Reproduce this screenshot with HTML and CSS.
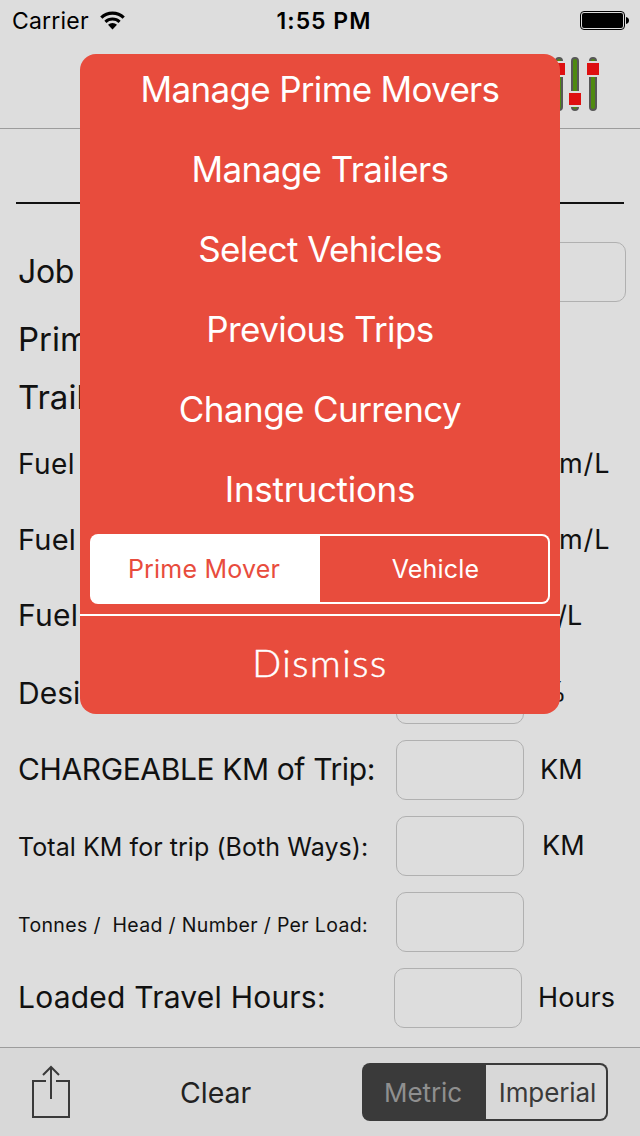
FILE: index.html
```html
<!DOCTYPE html>
<html lang="en">
<head>
  <meta charset="UTF-8" />
  <title>Trip Calculator</title>
  <link rel="stylesheet" href="styles.css">
</head>
<body>
  <div class="status-bar">
    <div class="carrier">
      <span>Carrier</span>
      <svg class="wifi" width="25" height="19" viewBox="0 0 25 19">
        <path d="M1.3 6.6a16 16 0 0 1 22.4 0" fill="none" stroke="#000" stroke-width="3.2" />
        <path d="M5.4 10.9a10.2 10.2 0 0 1 14.2 0" fill="none" stroke="#000" stroke-width="3" />
        <path d="M8 13.8a6.4 6.4 0 0 1 9 0L12.5 18.4z" fill="#000" />
      </svg>
    </div>
    <div class="clock">1:55 PM</div>
    <svg class="battery" width="49" height="19" viewBox="0 0 49 19">
      <rect x="0.5" y="0.5" width="44" height="18" rx="3.5" fill="none" stroke="#000" />
      <rect x="2" y="2" width="41" height="15" rx="2" fill="#000" />
      <path d="M46 6c4 .6 4 6.400 0 7z" fill="#000" />
    </svg>
  </div>

  <div class="nav-bar">
    <svg width="46" height="54" viewBox="0 0 46 54">
      <g fill="#4f8a10" stroke="#575757" stroke-width="2">
        <rect x="3" y="1" width="6" height="52" rx="3" />
        <rect x="19" y="1" width="6" height="52" rx="3" />
        <rect x="37" y="1" width="6" height="52" rx="3" />
      </g>
      <g fill="#ddd">
        <rect x="0" y="4" width="12" height="16" />
        <rect x="16" y="34" width="12" height="16" />
        <rect x="34" y="4" width="12" height="16" />
      </g>
      <g fill="#de1010">
        <rect x="0" y="6" width="12" height="12" />
        <rect x="16" y="36" width="12" height="12" />
        <rect x="34" y="6" width="12" height="12" />
      </g>
    </svg>
  </div>

  <div class="form">
    <div class="title"></div>

    <div class="row job">
      <label>Job</label>
      <input type="text" />
    </div>
    <div class="row picker prime"><label>Prim</label></div>
    <div class="row picker trailer"><label>Trail</label></div>

    <div class="row fuel-loaded">
      <label>Fuel</label>
      <input type="text" />
      <span class="unit">Km/L</span>
    </div>
    <div class="row fuel-empty">
      <label>Fuel</label>
      <input type="text" />
      <span class="unit">Km/L</span>
    </div>
    <div class="row fuel-price">
      <label>Fuel</label>
      <input type="text" />
      <span class="unit">$/L</span>
    </div>
    <div class="row profit">
      <label>Desi</label>
      <input type="text" />
      <span class="unit">%</span>
    </div>
    <div class="row chargeable">
      <label>CHARGEABLE KM of Trip:</label>
      <input type="text" />
      <span class="unit">KM</span>
    </div>
    <div class="row total">
      <label>Total KM for trip (Both Ways):</label>
      <input type="text" />
      <span class="unit">KM</span>
    </div>
    <div class="row tonnes">
      <label>Tonnes /&nbsp; Head / Number / Per Load:</label>
      <input type="text" />
    </div>
    <div class="row hours">
      <label>Loaded Travel Hours:</label>
      <input type="text" />
      <span class="unit">Hours</span>
    </div>
  </div>

  <div class="toolbar">
    <svg class="share" width="40" height="54" viewBox="0 0 40 54" fill="none" stroke="#3a3a3a" stroke-width="2">
      <path d="M15 16H2v36h36V16H25" />
      <path d="M20 34V2M12 10l8-8 8 8" />
    </svg>
    <div class="clear">Clear</div>
    <div class="segments units">
      <div class="segment active">Metric</div>
      <div class="segment">Imperial</div>
    </div>
  </div>

  <div class="menu">
    <div class="menu-item long">Manage Prime Movers</div>
    <div class="menu-item">Manage Trailers</div>
    <div class="menu-item">Select Vehicles</div>
    <div class="menu-item">Previous Trips</div>
    <div class="menu-item">Change Currency</div>
    <div class="menu-item short">Instructions</div>
    <div class="segments vehicle">
      <div class="segment active">Prime Mover</div>
      <div class="segment">Vehicle</div>
    </div>
    <div class="dismiss">Dismiss</div>
  </div>
</body>
</html>
```
FILE: styles.css
```css
* {
  box-sizing: border-box;
}

body {
  margin: 0;
  width: 640px;
  height: 1136px;
  overflow: hidden;
  position: relative;
  display: flex;
  flex-direction: column;
  background-color: #ddd;
  color: #111;
  font-family: Inter, "Liberation Sans", sans-serif;
  white-space: nowrap;
}

/* status bar */
.status-bar {
  height: 41px;
  padding: 0 11px 0 12px;
  display: grid;
  grid-template-columns: 1fr auto 1fr;
  align-items: center;
  color: #000;
  font-size: 23px;
}

.carrier {
  display: flex;
  align-items: center;
  gap: 11px;
  letter-spacing: 0.2px;
}

.wifi {
  margin-top: -1px;
}

.clock {
  font-weight: 600;
  letter-spacing: 1px;
  padding-left: 7px;
}

.battery {
  justify-self: end;
}

/* top bar */
.nav-bar {
  height: 88px;
  padding: 16px 41px 0 0;
  display: flex;
  justify-content: flex-end;
  border-bottom: 1px solid #9c9c9c;
}

/* form */
.form {
  height: 918px;
}

.title {
  height: 75px;
  margin: 0 16px 38px;
  border-bottom: 2px solid #111;
}

.row {
  display: flex;
  height: 60px;
  margin-bottom: 16px;
  padding-left: 18px;
  line-height: 60px;
}

.row label {
  width: 378px;
  margin-top: -1px;
  font-size: 30px;
}

.row input {
  width: 128px;
  height: 60px;
  border: 1px solid #b0b0b0;
  border-radius: 10px;
  background: transparent;
}

.unit {
  margin: 0 0 0 16px;
  font-size: 27px;
}

.job {
  margin-bottom: 8px;
}

.row.job label {
  width: 178px;
  margin-top: 0;
  font-size: 32px;
  letter-spacing: -0.3px;
}

.job input {
  width: 430px;
}

.picker {
  height: 58px;
  margin-bottom: 0;
  line-height: 58px;
}

.row.picker label {
  margin-top: 0;
  font-size: 33px;
}

.trailer {
  margin-bottom: 8px;
}

.fuel-loaded label,
.fuel-empty label {
  margin-top: 0;
}

.row.fuel-loaded label {
  font-size: 28px;
  letter-spacing: 0.4px;
}

.row.fuel-empty label {
  font-size: 29px;
  letter-spacing: 0.2px;
}

.row.fuel-price label {
  margin-top: -1px;
  letter-spacing: 0.3px;
}

.fuel-loaded .unit,
.fuel-empty .unit {
  letter-spacing: 0.9px;
}

.fuel-price {
  margin-bottom: 18px;
}

.profit .unit {
  margin-top: -2px;
}

.chargeable label {
  letter-spacing: -0.38px;
}

.row.total label {
  margin-top: 1px;
  font-size: 25px;
  letter-spacing: 0.06px;
}

.total .unit {
  margin-left: 18px;
}

.row.tonnes label {
  margin-top: 3px;
  font-size: 19.5px;
  letter-spacing: 0.35px;
}

.row.hours label {
  width: 376px;
  letter-spacing: 0.22px;
}

.hours .unit {
  letter-spacing: 0.1px;
}

/* bottom bar */
.toolbar {
  height: 89px;
  padding: 0 32px 0 31px;
  display: flex;
  align-items: center;
  border-top: 1px solid #9c9c9c;
  background-color: #d8d8d8;
}

.share {
  margin-top: -1px;
}

.clear {
  margin-left: 109px;
  color: #222;
  font-size: 28.5px;
}

.segments {
  display: flex;
}

.segment {
  flex: 1;
  display: flex;
  align-items: center;
  justify-content: center;
  border: 2px solid;
  border-left: none;
  border-radius: 0 8px 8px 0;
}

.segment.active {
  flex: none;
  border: none;
  border-radius: 8px 0 0 8px;
}

.units {
  width: 246px;
  height: 58px;
  margin-left: auto;
  color: #3a3a3a;
  font-size: 26px;
  letter-spacing: -0.1px;
}

.units .segment {
  padding-left: 3px;
}

.units .active {
  width: 124px;
  padding: 0 2px 0 0;
  background-color: #3a3a3a;
  color: #8f8f8f;
}

/* popup menu */
.menu {
  position: absolute;
  top: 54px;
  left: 80px;
  width: 480px;
  height: 660px;
  display: flex;
  flex-direction: column;
  gap: 8px;
  border-radius: 16px;
  overflow: hidden;
  background-color: #e84c3d;
  color: #fff;
}

.menu-item {
  height: 72px;
  line-height: 70px;
  text-align: center;
  font-size: 35px;
  letter-spacing: -0.58px;
}

.menu-item.long {
  letter-spacing: -0.68px;
}

.menu-item.short {
  letter-spacing: -0.3px;
}

.vehicle {
  height: 70px;
  margin: 0 10px;
  font-size: 25px;
  letter-spacing: 0.2px;
}

.vehicle .segment {
  padding-left: 3px;
}

.vehicle .active {
  width: 230px;
  padding: 0 2px 0 0;
  background-color: #fff;
  color: #e84c3d;
}

.dismiss {
  height: 100px;
  margin-top: 2px;
  border-top: 2px solid #fff;
  text-align: center;
  line-height: 92px;
  font-family: Lato, sans-serif;
  font-size: 38px;
  font-weight: 300;
  letter-spacing: 1.6px;
  -webkit-text-stroke: 0.5px #fff;
}
```
